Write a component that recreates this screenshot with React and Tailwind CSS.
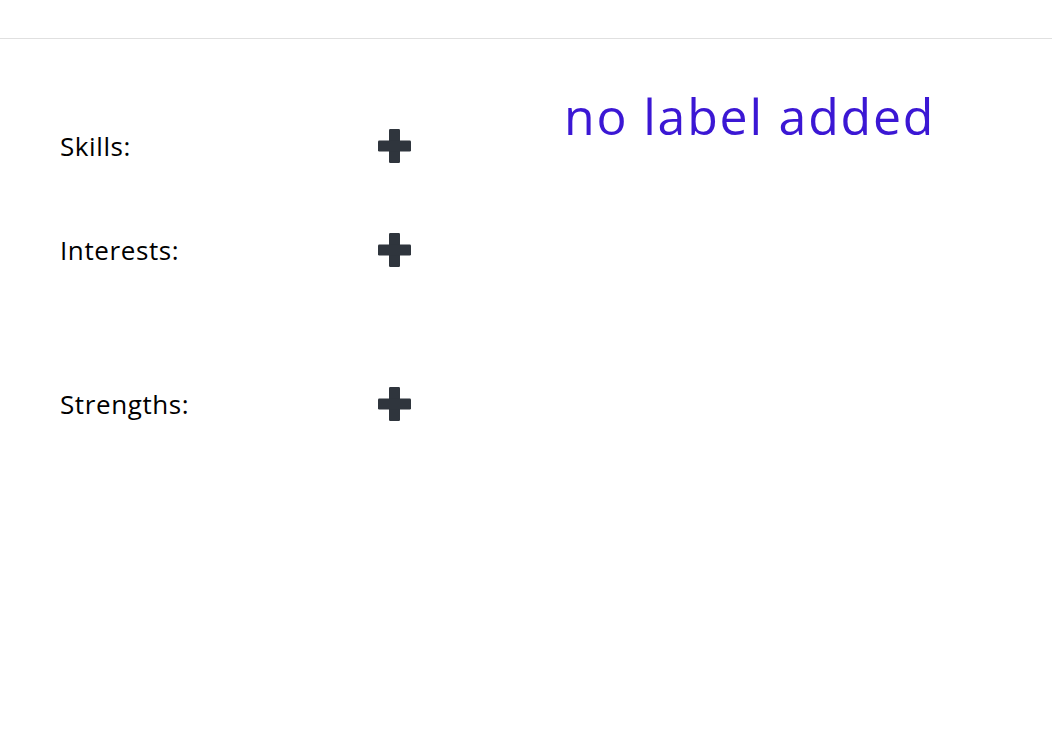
import React from "react";

function Plus() {
  return (
    <svg width="33" height="34" viewBox="0 0 33 34" className="block shrink-0">
      <rect x="11" y="0" width="11" height="34" rx="1.2" fill="#2f353d" />
      <rect x="0" y="11.5" width="33" height="11" rx="1.2" fill="#2f353d" />
    </svg>
  );
}

function Row({ label, className }) {
  return (
    <div className={"flex items-center h-[34px] " + className}>
      <span className="w-[318px] text-[26px] leading-none tracking-[0.6px] text-black">{label}</span>
      <Plus />
    </div>
  );
}

export default function App() {
  return (
    <div className="w-[1052px] h-[736px] bg-white" style={{ fontFamily: '"Open Sans", "Noto Sans", sans-serif' }}>
      <div className="h-[39px] border-b border-[#e0e0e0]" />
      <div className="flex">
        <div className="pl-[60px] pt-[90px] flex flex-col">
          <Row label="Skills:" className="" />
          <Row label="Interests:" className="mt-[70px]" />
          <Row label="Strengths:" className="mt-[120px]" />
        </div>
        <div className="pl-[153px] pt-[52px]">
          <div className="text-[50px] leading-none tracking-[1.8px] text-[#3b17d4]">no label added</div>
        </div>
      </div>
    </div>
  );
}
